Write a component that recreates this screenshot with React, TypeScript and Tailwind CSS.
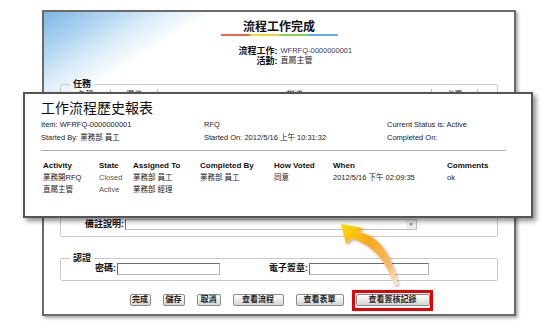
import React from "react";

const font = "font-['Liberation_Sans','Noto_Sans_CJK_TC',sans-serif]";

const history = [
  ["業務開RFQ", "Closed", "業務部 員工", "業務部 員工", "同意", "2012/5/16 下午 02:09:35", "ok"],
  ["直屬主管", "Active", "業務部 經理", "", "", "", ""],
];

const buttons = [
  { label: "完成", w: "w-[21px]" },
  { label: "儲存", w: "w-[22px]" },
  { label: "取消", w: "w-[24px]" },
  { label: "查看流程", w: "w-[51px]" },
  { label: "查看表單", w: "w-[48px]" },
];

const Btn = ({ label, w }: { label: string; w: string }) => (
  <div
    className={`${w} h-[12px] flex items-center justify-center rounded-[2px] border border-[#8a8a8a] bg-[linear-gradient(#fdfdfd,#d6d6d6)] text-[8px] font-bold leading-none text-[#222]`}
  >
    {label}
  </div>
);

const Input = ({ w }: { w: string }) => (
  <div className={`${w} h-[12px] border border-[#b4b4b4] border-t-[#707070] border-l-[#707070] bg-white`} />
);

const App = () => {
  return (
    <div className={`relative w-[550px] h-[323px] overflow-hidden bg-white pt-[10px] ${font}`}>
      {/* back page */}
      <div className="ml-[42px] w-[474px] h-[306px] border-2 border-[#6b6b6b] shadow-[2px_2px_3px_rgba(0,0,0,0.35)] bg-[linear-gradient(148deg,#7fb6e2_0%,#a9d1f0_6%,#d9ebf8_12%,#ffffff_18%)]">
        <div className="pt-[8px] text-center text-[12px] font-bold leading-[14px] text-[#111]">流程工作完成</div>
        <div className="mx-auto flex h-[2px] w-[117px]">
          <div className="flex-1 bg-[#f0644a]" />
          <div className="flex-1 bg-[#f5d53c]" />
          <div className="flex-1 bg-[#8cd15a]" />
          <div className="flex-1 bg-[#5fb0f0]" />
        </div>
        <div className="mt-[10px] grid grid-cols-2 gap-x-[3px] leading-[10px]">
          <div className="text-right text-[9px] font-bold text-[#111]">流程工作:</div>
          <div className="text-[7.5px] text-[#3a3a5a]">WFRFQ-0000000001</div>
          <div className="text-right text-[9px] font-bold text-[#111]">活動:</div>
          <div className="text-[8px] text-[#222]">直屬主管</div>
        </div>

        <fieldset className="mx-[16px] mt-[13px] rounded-[2px] border border-[#c9c9c9] px-0">
          <legend className="ml-[9px] px-[3px] text-[9px] font-bold leading-[10px] text-[#111]">任務</legend>
          <div className="flex h-[12px] text-[8px] leading-[12px] text-[#333]">
            <div className="w-[50px] border-r border-[#bbb] text-center">名稱</div>
            <div className="w-[47px] border-r border-[#bbb] text-center">欄位</div>
            <div className="w-[274px] border-r border-[#bbb] text-center">描述</div>
            <div className="w-[46px] border-r border-[#bbb] text-center">必要</div>
          </div>
          <div className="mt-[118px] mb-[6px] flex items-center">
            <div className="w-[64px] pr-[1px] text-right text-[9px] font-bold leading-[11px] text-[#111]">備註說明:</div>
            <div className="relative h-[11px] w-[292px] border border-[#c0c0c0] border-l-[#707070] bg-white">
              <div className="absolute right-0 top-0 flex h-full w-[10px] items-center justify-center bg-[#eee] text-[5px] text-[#777]">▼</div>
            </div>
          </div>
        </fieldset>

        <fieldset className="mx-[16px] mt-[16px] rounded-[2px] border border-[#c9c9c9] px-0">
          <legend className="ml-[9px] px-[3px] text-[9px] font-bold leading-[10px] text-[#111]">認證</legend>
          <div className="mb-[5px] flex h-[12px] items-center">
            <div className="w-[56px] pr-[1px] text-right text-[9px] font-bold text-[#111]">密碼:</div>
            <Input w="w-[103px]" />
            <div className="w-[89px] pr-[1px] text-right text-[9px] font-bold text-[#111]">電子簽章:</div>
            <Input w="w-[120px]" />
          </div>
        </fieldset>

        <div className="mt-[13px] flex justify-center gap-[12px] pl-[1px]">
          {buttons.map((b) => (
            <Btn key={b.label} label={b.label} w={b.w} />
          ))}
          <div className="relative">
            <Btn label="查看簽核記錄" w="w-[74px]" />
            <div className="absolute -left-[4px] -right-[3px] -top-[4px] -bottom-[5px] border-[3px] border-[#e60000]" />
          </div>
        </div>
      </div>

      {/* history report popup */}
      <div className="absolute left-[23px] top-[92px] w-[510px] h-[126px] border-2 border-[#555] bg-white pl-[16px] pr-[25px] pt-[6px] shadow-[3px_3px_5px_rgba(0,0,0,0.45)]">
        <div className="text-[14px] leading-[16px] text-[#111]">工作流程歷史報表</div>
        <div className="mt-[2px] grid grid-cols-[163px_183px_1fr] text-[7.5px] leading-[13px] text-[#222]">
          <div>Item: WFRFQ-0000000001</div>
          <div>RFQ</div>
          <div>Current Status is: Active</div>
          <div>Started By: 業務部 員工</div>
          <div>Started On: 2012/5/16 上午 10:31:32</div>
          <div>Completed On:</div>
        </div>
        <div className="mt-[6px] h-px bg-[#b0b0b0]" />
        <div className="ml-[2px] mt-[9px] grid grid-cols-[56px_34px_67px_74px_59px_114px_1fr] text-[7.5px] leading-[12px] text-[#222]">
          {["Activity", "State", "Assigned To", "Completed By", "How Voted", "When", "Comments"].map((h) => (
            <div key={h} className="text-[8px] font-bold text-[#111]">
              {h}
            </div>
          ))}
          {history.map((r) =>
            r.map((c, i) => (
              <div key={r[0] + i} className={i === 1 ? "text-[#555]" : ""}>
                {c}
              </div>
            ))
          )}
        </div>
      </div>

      {/* pointer arrow */}
      <svg className="pointer-events-none absolute left-0 top-0" width="550" height="323" viewBox="0 0 550 323">
        <defs>
          <linearGradient id="arr" gradientUnits="userSpaceOnUse" x1="342" y1="226" x2="397" y2="286">
            <stop offset="0" stopColor="#ffd800" />
            <stop offset="0.35" stopColor="#f9a91e" />
            <stop offset="0.75" stopColor="#f7b96a" />
            <stop offset="1" stopColor="#fdebd0" />
          </linearGradient>
          <filter id="sh" x="-20%" y="-20%" width="140%" height="140%">
            <feDropShadow dx="1.5" dy="1.5" stdDeviation="1.2" floodColor="#000" floodOpacity="0.3" />
          </filter>
        </defs>
        <g filter="url(#sh)">
          <path d="M341 224 L346 244 L363 228 Z" fill="url(#arr)" />
          <path d="M350 238 Q381 246 394 285 L398 285 Q389 238 359 232 Z" fill="url(#arr)" />
        </g>
      </svg>
    </div>
  );
};

export default App;
